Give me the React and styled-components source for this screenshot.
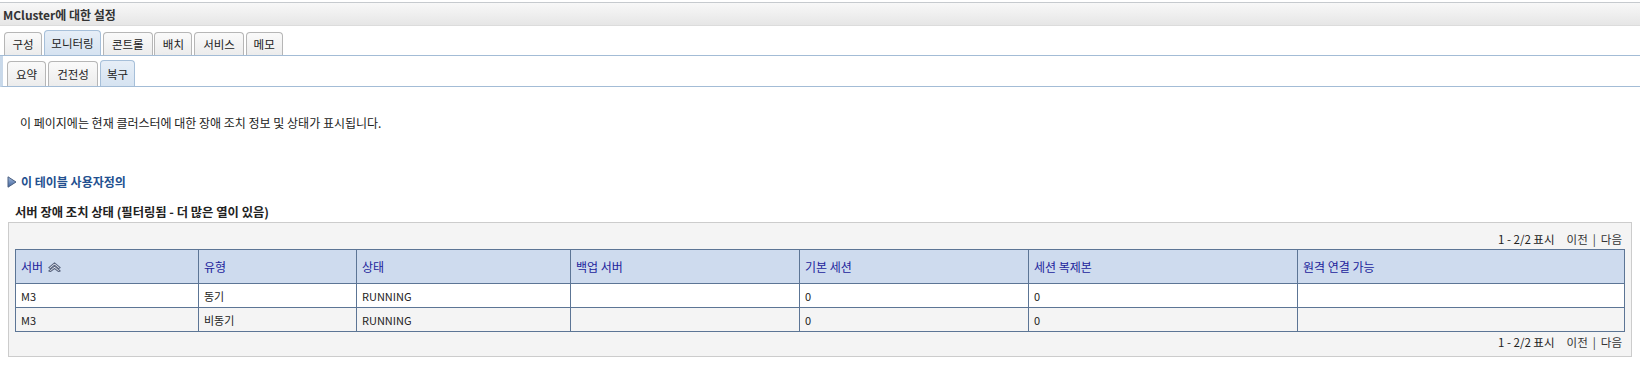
import React from 'react';
import styled, { createGlobalStyle } from 'styled-components';

const GlobalStyle = createGlobalStyle`
  html, body { margin: 0; padding: 0; background: #ffffff; }
  body {
    font-family: "Noto Sans CJK KR", "Noto Sans", sans-serif;
    font-size: 12px;
    color: #222222;
  }
`;

const Page = styled.div`
  padding-top: 2px;
`;

const TitleBar = styled.div`
  height: 22px;
  border-top: 1px solid #c6cace;
  border-bottom: 1px solid #dcdcdc;
  background: linear-gradient(#f8f8f8, #e6e6e6);
  display: flex;
  align-items: center;
  padding-left: 3px;
  font-weight: bold;
  font-size: 12px;
  color: #333333;
`;

const TabRow = styled.div`
  height: 29px;
  display: flex;
  align-items: flex-end;
  gap: 1.7px;
  padding-left: 4px;
  border-bottom: 1px solid #a3bcd6;
`;

const Tab = styled.div`
  box-sizing: border-box;
  height: ${(p) => (p.$active ? 25 : 23)}px;
  padding: 0 ${(p) => p.$pad || 8}px;
  display: flex;
  align-items: center;
  justify-content: center;
  font-size: 11.5px;
  color: #222222;
  border: 1px solid ${(p) => (p.$active ? '#a6bfd9' : '#b6b6b6')};
  border-bottom: none;
  border-radius: 4px 4px 0 0;
  background: ${(p) =>
    p.$active ? 'linear-gradient(#e6eef7, #d6e3f1)' : 'linear-gradient(#fafafa, #ececec)'};
`;

const SubTabRow = styled.div`
  height: 30px;
  display: flex;
  align-items: flex-end;
  gap: 2px;
  padding-left: 4px;
  border-left: 3px solid #c9d9ea;
  border-bottom: 1px solid #a3bcd6;
`;

const SubTab = styled(Tab)`
  height: ${(p) => (p.$active ? 26 : 25)}px;
`;

const Content = styled.div`
  padding: 0;
`;

const Description = styled.p`
  margin: 28px 0 0 20px;
  line-height: 16px;
  font-size: 12px;
  color: #222222;
`;

const CustomizeLink = styled.a`
  display: flex;
  align-items: center;
  gap: 4px;
  margin: 43px 0 0 7px;
  line-height: 16px;
  font-size: 12px;
  font-weight: bold;
  color: #22508f;
  text-decoration: none;
`;

const TableTitle = styled.div`
  margin: 14px 0 0 15px;
  line-height: 16px;
  font-size: 12.3px;
  font-weight: bold;
  color: #222222;
`;

const Box = styled.div`
  margin: 2px 8px 0 8px;
  border: 1px solid #cccccc;
  background: #f4f4f4;
  padding: 6px 6px 4px 6px;
`;

const Pager = styled.div`
  height: 20px;
  display: flex;
  justify-content: flex-end;
  align-items: center;
  padding-right: 3px;
  font-size: 11.5px;
  color: #222222;
`;

const PagerCount = styled.span`
  margin-right: 12px;
`;

const PagerLink = styled.span`
  color: #333333;
`;

const PagerSep = styled.span`
  margin: 0 5px;
  color: #333333;
`;

const Table = styled.table`
  width: 100%;
  table-layout: fixed;
  border-collapse: separate;
  border-spacing: 0;
  border-top: 1px solid #5c7595;
  border-left: 1px solid #5c7595;
`;

const Th = styled.th`
  height: 33px;
  padding: 0 5px;
  background: #cedbee;
  border-right: 1px solid #5c7595;
  border-bottom: 1px solid #5c7595;
  text-align: left;
  font-weight: normal;
  font-size: 12px;
  color: #22249c;
  white-space: nowrap;
`;

const HeadInner = styled.span`
  display: inline-flex;
  align-items: center;
  gap: 5px;
`;

const Td = styled.td`
  height: 23px;
  padding: 0 5px;
  background: ${(p) => (p.$alt ? '#f4f4f4' : '#ffffff')};
  border-right: 1px solid #5c7595;
  border-bottom: 1px solid #5c7595;
  font-size: 11px;
  color: #222222;
`;

const SortIcon = () => (
  <svg width="13" height="10" viewBox="0 0 13 10">
    <path d="M0.8 5.6 L6.5 0.8 L12.2 5.6 L10.6 6.6 L6.5 3.2 L2.4 6.6 Z" fill="#f2f4f9" stroke="#5a6680" strokeWidth="1.1" strokeLinejoin="round" />
    <path d="M0.8 8.9 L6.5 4.1 L12.2 8.9 L10.6 9.6 L6.5 6.5 L2.4 9.6 Z" fill="#f2f4f9" stroke="#5a6680" strokeWidth="1.1" strokeLinejoin="round" />
  </svg>
);

const Triangle = () => (
  <svg width="10" height="12" viewBox="0 0 10 12">
    <defs>
      <linearGradient id="tri" x1="0" y1="0" x2="0" y2="1">
        <stop offset="0" stopColor="#a3bbdd" />
        <stop offset="1" stopColor="#3f639c" />
      </linearGradient>
    </defs>
    <path d="M1 0.8 L9 6 L1 11.2 Z" fill="url(#tri)" stroke="#4a5f80" strokeWidth="1" strokeLinejoin="round" />
  </svg>
);

const columns = [
  { key: 'server', label: '서버', width: 183, sort: true },
  { key: 'type', label: '유형', width: 158 },
  { key: 'state', label: '상태', width: 214 },
  { key: 'backup', label: '백업 서버', width: 229 },
  { key: 'primary', label: '기본 세션', width: 229 },
  { key: 'replica', label: '세션 복제본', width: 269 },
  { key: 'remote', label: '원격 연결 가능' },
];

const rows = [
  { server: 'M3', type: '동기', state: 'RUNNING', backup: '', primary: '0', replica: '0', remote: '' },
  { server: 'M3', type: '비동기', state: 'RUNNING', backup: '', primary: '0', replica: '0', remote: '' },
];

const tabs = [
  { label: '구성', pad: 7.5 },
  { label: '모니터링', pad: 6.5 },
  { label: '콘트롤', pad: 8 },
  { label: '배치', pad: 7.5 },
  { label: '서비스', pad: 8 },
  { label: '메모', pad: 7 },
];
const subTabs = [
  { label: '요약', pad: 8 },
  { label: '건전성', pad: 8 },
  { label: '복구', pad: 6 },
];

const PagerLine = () => (
  <Pager>
    <PagerCount>1 - 2/2 표시</PagerCount>
    <PagerLink>이전</PagerLink>
    <PagerSep>|</PagerSep>
    <PagerLink>다음</PagerLink>
  </Pager>
);

export default function App() {
  return (
    <Page>
      <GlobalStyle />
      <TitleBar>MCluster에 대한 설정</TitleBar>
      <TabRow>
        {tabs.map((t) => (
          <Tab key={t.label} $pad={t.pad} $active={t.label === '모니터링'}>{t.label}</Tab>
        ))}
      </TabRow>
      <SubTabRow>
        {subTabs.map((t) => (
          <SubTab key={t.label} $pad={t.pad} $active={t.label === '복구'}>{t.label}</SubTab>
        ))}
      </SubTabRow>
      <Content>
        <Description>이 페이지에는 현재 클러스터에 대한 장애 조치 정보 및 상태가 표시됩니다.</Description>
        <CustomizeLink href="#">
          <Triangle />
          이 테이블 사용자정의
        </CustomizeLink>
        <TableTitle>서버 장애 조치 상태 (필터링됨 - 더 많은 열이 있음)</TableTitle>
        <Box>
          <PagerLine />
          <Table>
            <colgroup>
              {columns.map((c) => (
                <col key={c.key} style={c.width ? { width: c.width } : undefined} />
              ))}
            </colgroup>
            <thead>
              <tr>
                {columns.map((c) => (
                  <Th key={c.key}>
                    <HeadInner>
                      {c.label}
                      {c.sort && <SortIcon />}
                    </HeadInner>
                  </Th>
                ))}
              </tr>
            </thead>
            <tbody>
              {rows.map((r, i) => (
                <tr key={i}>
                  {columns.map((c) => (
                    <Td key={c.key} $alt={i % 2 === 1}>{r[c.key]}</Td>
                  ))}
                </tr>
              ))}
            </tbody>
          </Table>
          <PagerLine />
        </Box>
      </Content>
    </Page>
  );
}
